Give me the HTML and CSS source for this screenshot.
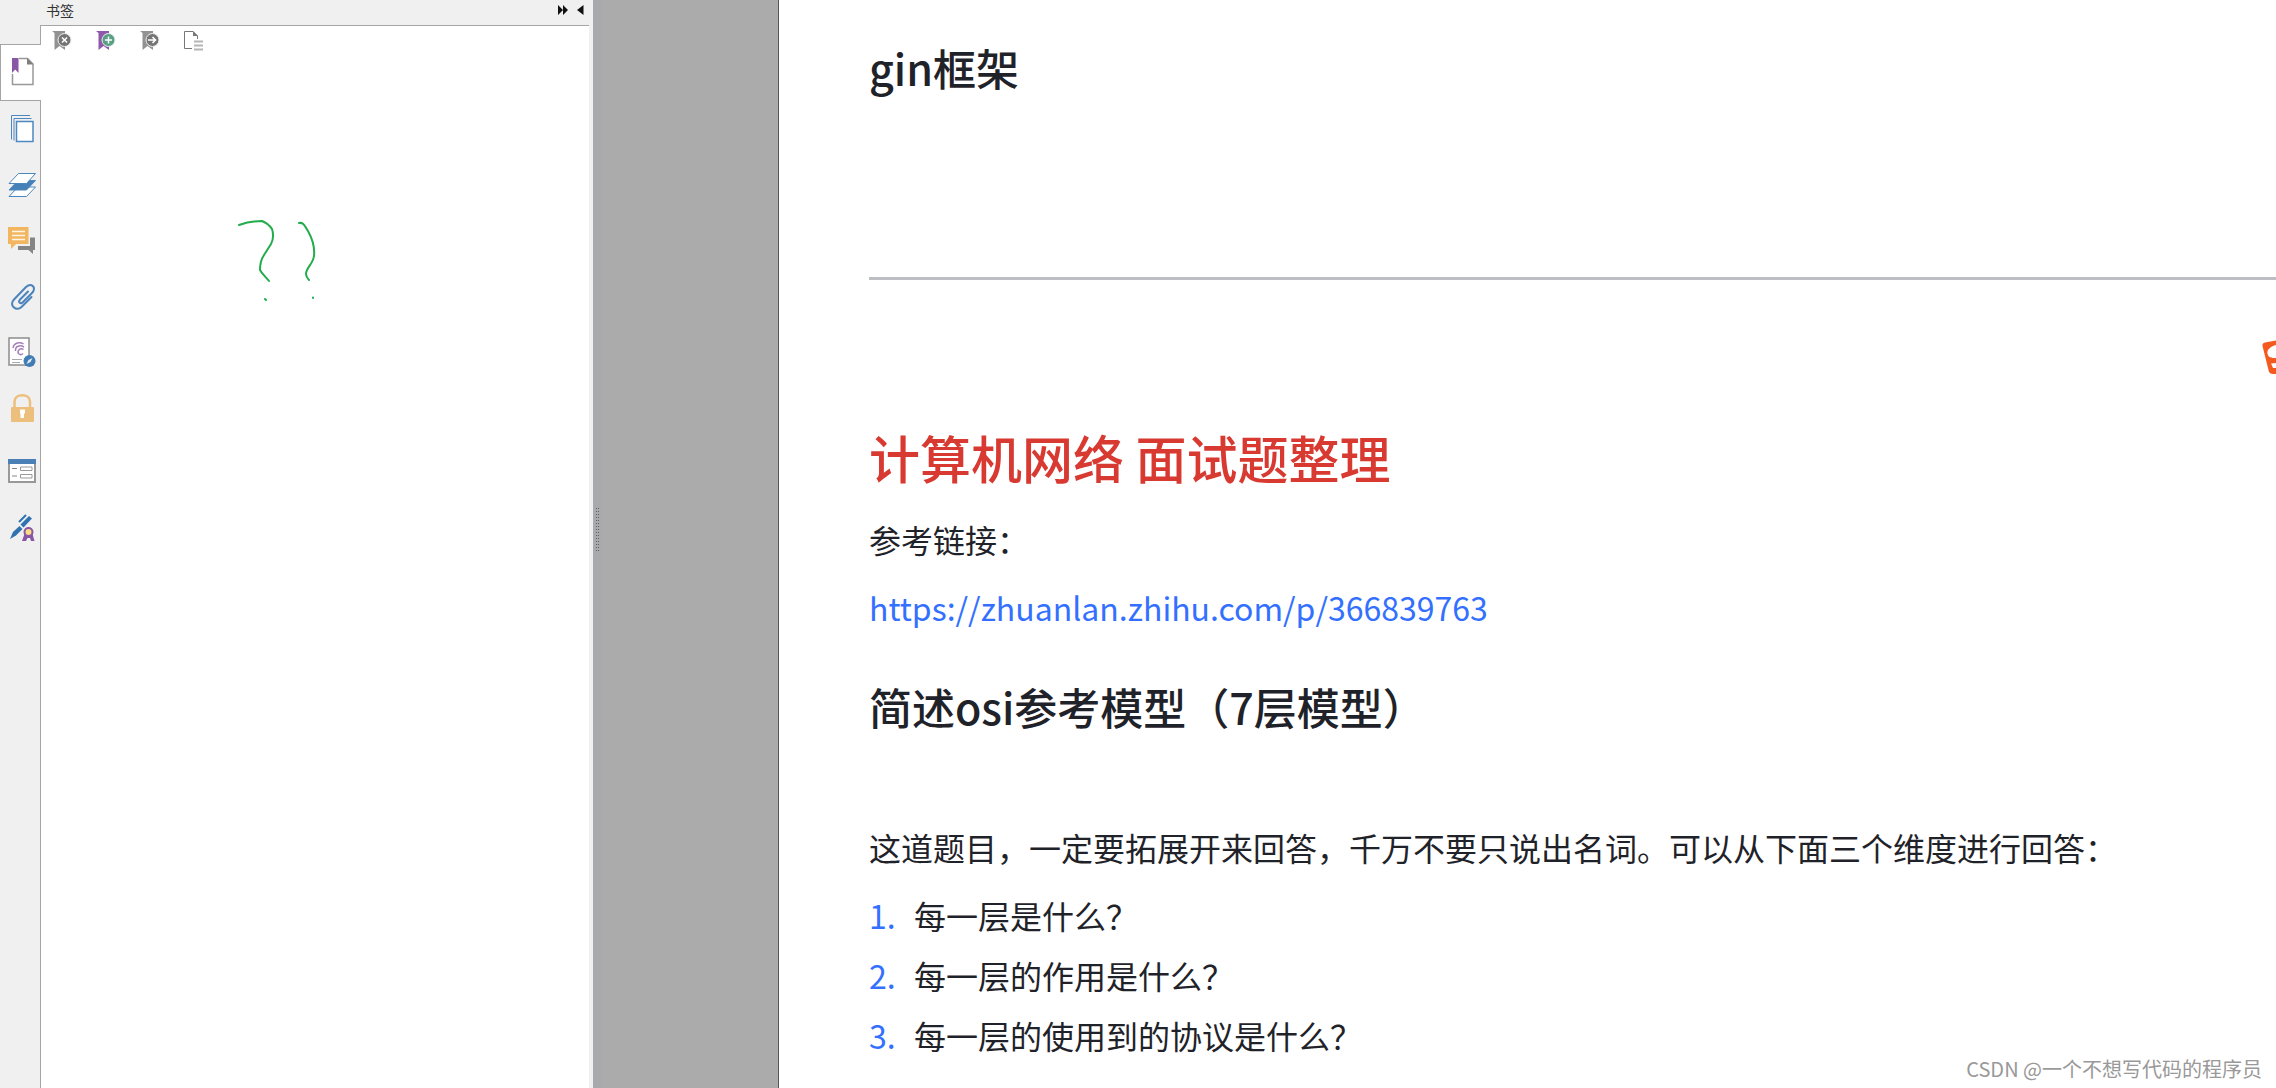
FILE: index.html
```
<!DOCTYPE html>
<html lang="zh-CN">
<head>
  <meta charset="UTF-8" />
  <meta name="viewport" content="width=device-width, initial-scale=1.0"/>
  <title>面试题整理</title>
  <link rel="stylesheet" href="styles.css">
</head>
<body>

  <!-- Navigation rail -->
  <nav class="rail">
    <button class="rail-button active" aria-label="书签">
      <svg viewBox="0 0 40 56">
        <path d="M19 14.500H27.500L33 20V40.500H12.500V30" fill="none" stroke="#999" stroke-width="1.500"/>
        <path d="M27 14L33.500 20.500H27Z" fill="#808080"/>
        <path d="M12 14H18.500V29L15.200 25.500L12 29Z" fill="#8a57a5"/>
      </svg>
    </button>
    <button class="rail-button" aria-label="页面">
      <svg viewBox="0 0 40 56" fill="none" stroke="#4d88c2">
        <path d="M11.500 39.500V15.500H30M14 40.500V18.500H31.500"/>
        <rect x="16.500" y="21.500" width="16.500" height="20" fill="#fff" stroke-width="1.500"/>
      </svg>
    </button>
    <button class="rail-button" aria-label="图层">
      <svg viewBox="0 0 40 56" stroke="#4d86bd" stroke-width="1">
        <path d="M9 40.500L18 31H35.500L26.500 40.500Z" fill="#fff"/>
        <path d="M9 34L18 24.500H35.500L26.500 34Z" fill="#4580b8"/>
        <path d="M9 27.500L18.500 17.500H35.500L26.500 27.500Z" fill="#fff"/>
      </svg>
    </button>
    <button class="rail-button" aria-label="注释">
      <svg viewBox="0 0 40 56">
        <path d="M30 25.500H35V38H33V42L28.500 38H18V34H30Z" fill="#858585"/>
        <path d="M8 15H28.500V32H16L11 37V32H8Z" fill="#f2b661"/>
        <path d="M12 19.500H25M12 23.500H25M12 27.500H25" stroke="#fff5e4" stroke-width="1.500"/>
      </svg>
    </button>
    <button class="rail-button" aria-label="附件">
      <svg viewBox="0 0 40 56" fill="none" stroke="#4b83bc" stroke-width="2" stroke-linecap="round" stroke-linejoin="round">
        <path d="M31.500 29L21.500 39C18 42.500 12.500 40.500 12 36C12 34 12.500 33 14 31.500L26 19C30 15.500 34 17 34 21C34 23 33 24 31.500 25.500L22.500 34.500C20.500 36.500 18 34 19.800 31.800L28 23.500"/>
      </svg>
    </button>
    <button class="rail-button" aria-label="数字签名">
      <svg viewBox="0 0 40 56">
        <rect x="9" y="14" width="20" height="27" fill="#fff" stroke="#8c8c8c" stroke-width="1.500"/>
        <path d="M12 35.500H22M12 38.500H20" stroke="#aaa"/>
        <path d="M13 24C14 18.500 20 17.500 23.500 20M15.500 27C15 22 20 20.500 24 23M23.500 25.500C20 23.500 17 27 18.500 29.500C20 31 22 30.500 23 29.500" fill="none" stroke="#a680bb" stroke-width="1.500"/>
        <circle cx="29.500" cy="37" r="6" fill="#417cb4"/>
        <path d="M26.500 40L28.500 36L32.500 34L30.500 38Z" fill="#e3edf6"/>
      </svg>
    </button>
    <button class="rail-button" aria-label="安全">
      <svg viewBox="0 0 40 56">
        <path d="M14.500 28V21.500C14.500 13 30 13 30 21.500V28" fill="none" stroke="#ecbf7c" stroke-width="2.500"/>
        <rect x="11" y="27" width="23" height="15" rx="1" fill="#ecbf7c"/>
        <path d="M20 29.500H25V33L24 34V38H20.500V34L20 33Z" fill="#fff"/>
      </svg>
    </button>
    <button class="rail-button spaced" aria-label="表单域">
      <svg viewBox="0 0 40 56">
        <rect x="9" y="18" width="26" height="22" fill="#fff" stroke="#999" stroke-width="2"/>
        <rect x="8" y="17" width="28" height="5" fill="#4a80b6"/>
        <path d="M12 26.500H17M12 34H17" stroke="#888"/>
        <path d="M20.500 25H32V28.500H20.500ZM20.500 32.500H32V36H20.500Z" fill="#fff" stroke="#999"/>
      </svg>
    </button>
    <button class="rail-button" aria-label="签名">
      <svg viewBox="0 0 40 56">
        <path d="M10 41L13 34L19.500 28L22.500 31L16 37.500Z" fill="#2f72b0"/>
        <path d="M20.500 26.500L29 18L32 20.500L23.500 29.500Z" fill="#2f72b0"/>
        <path d="M19 24L26 17" stroke="#2f72b0" stroke-width="2"/>
        <path d="M24.500 36L22 43H26L27.500 40H30L31 43H34.500L32.500 36Z" fill="#8856a5"/>
        <circle cx="28.500" cy="34" r="4" fill="#fbdc80" stroke="#8856a5" stroke-width="2"/>
      </svg>
    </button>
  </nav>

  <!-- Bookmark panel -->
  <aside class="panel">
    <header class="panel-header">
      <span class="panel-title">书签</span>
      <button class="header-button" aria-label="展开">
        <svg width="10" height="10" viewBox="0 0 10 10"><path d="M0 0L5 5L0 10ZM5 0L10 5L5 10Z" fill="#111"/></svg>
      </button>
      <button class="header-button" aria-label="折叠">
        <svg width="7" height="10" viewBox="0 0 7 10"><path d="M6.500 0V10L0 5Z" fill="#111"/></svg>
      </button>
    </header>
    <div class="panel-body">
      <div class="toolbar">
        <button class="tool-button" aria-label="删除书签">
          <svg viewBox="0 0 20 20">
            <path d="M0 0H13V13L13 19L7.500 15L2.500 19V2Z" fill="#929292"/>
            <circle cx="12.500" cy="9" r="6.500" fill="#757575" stroke="#eee"/>
            <path d="M10 6.500L15 11.500M15 6.500L10 11.500" stroke="#fff" stroke-width="1.500"/>
          </svg>
        </button>
        <button class="tool-button" aria-label="新建书签">
          <svg viewBox="0 0 20 20">
            <path d="M0 0H13V13L13 19L7.500 15L2.500 19V2Z" fill="#9058aa"/>
            <circle cx="12.500" cy="9" r="6.500" fill="#58a184" stroke="#eee"/>
            <path d="M9 9H16M12.500 5.500V12.500" stroke="#fff" stroke-width="1.500"/>
          </svg>
        </button>
        <button class="tool-button" aria-label="转到书签">
          <svg viewBox="0 0 20 20">
            <path d="M0 0H13V13L13 19L7.500 15L2.500 19V2Z" fill="#929292"/>
            <circle cx="12.500" cy="9" r="6.500" fill="#757575" stroke="#eee"/>
            <path d="M8 9H15.500M12.500 6L15.500 9L12.500 12" fill="none" stroke="#fff" stroke-width="1.500"/>
          </svg>
        </button>
        <button class="tool-button" aria-label="选项">
          <svg viewBox="0 0 20 20">
            <path d="M8 17.500H0.500V0.500H9L13.500 5V8" fill="none" stroke="#777"/>
            <path d="M9 0V5H14Z" fill="#777"/>
            <path d="M10 10.500H19M10 14.500H19M10 18.500H19" stroke="#b5b5b5" stroke-width="2"/>
          </svg>
        </button>
      </div>
      <!-- Pen marks -->
      <svg class="ink" width="80" height="84" viewBox="0 0 80 84">
        <path d="M1 6C9 3 16 2 24 2C29 4 32 7 34 10C36 16 35 21 33 25L26 36C22 42 22 47 22 51C24 55 28 58 31 62"/>
        <path d="M61 4C66 3 67 8 70 12C75 21 77 28 76 37C75 45 68 49 68 55C68 58 70 60 71 61"/>
        <path d="M27 80L28 81M75 78.500V79"/>
      </svg>
    </div>
  </aside>

  <!-- Document area -->
  <div class="splitter">
    <div class="grip"></div>
  </div>
  <main class="canvas">
    <article class="sheet">
      <h2>gin框架</h2>
      <hr>
      <h1>计算机网络 面试题整理</h1>
      <p>参考链接：</p>
      <p><a href="https://zhuanlan.zhihu.com/p/366839763">https://zhuanlan.zhihu.com/p/366839763</a></p>
      <h2 class="question">简述osi参考模型（7层模型）</h2>
      <p>这道题目，一定要拓展开来回答，千万不要只说出名词。可以从下面三个维度进行回答：</p>
      <ol>
        <li><span class="num">1.</span>每一层是什么？</li>
        <li><span class="num">2.</span>每一层的作用是什么？</li>
        <li><span class="num">3.</span>每一层的使用到的协议是什么？</li>
      </ol>
    </article>
  </main>

  <svg class="ime-logo" width="14" height="36" viewBox="0 0 14 36">
    <path d="M14 0.500L3 2.500Q0 3 0.500 6L7 32Q8 34 11 34H14Z" fill="#f4591f"/>
    <path d="M14 5C7 7 4 11 6 15C7 18 10 18 14 18Z" fill="#fff"/>
    <path d="M14 23L9 23.500L11 28H14Z" fill="#fff"/>
  </svg>
  <div class="watermark">CSDN @一个不想写代码的程序员</div>

</body>
</html>
```

FILE: styles.css
```
* {
  box-sizing: border-box;
}

body {
  margin: 0;
  min-height: 100vh;
  display: flex;
  position: relative;
  overflow-x: hidden;
  font-family: "Noto Sans CJK SC", sans-serif;
  background-color: #fff;
  color: #1f2329;
}

button {
  padding: 0;
  border: none;
  background: transparent;
  cursor: pointer;
}

svg {
  display: block;
}

/* Navigation rail */
.rail {
  width: 41px;
  flex: none;
  display: flex;
  flex-direction: column;
  padding-top: 44px;
  background: linear-gradient(#a5a5a5, #a5a5a5) 40px 25px / 1px 100% no-repeat, #f0f0f0;
}

.rail-button {
  width: 41px;
  height: 56px;
}

.rail-button svg {
  width: 40px;
  height: 56px;
}

.rail-button.active {
  background-color: #fff;
  box-shadow: inset 1px 1px #a5a5a5, 0 1px #a5a5a5;
}

.rail-button.spaced {
  margin-top: 6px;
}

/* Bookmark panel */
.panel {
  width: 552px;
  flex: none;
  display: flex;
  flex-direction: column;
  background-color: #f0f0f0;
  padding-right: 4px;
}

.panel-header {
  height: 25px;
  display: flex;
  align-items: center;
  gap: 9px;
  padding: 0 5px 6px 5px;
}

.panel-title {
  flex: 1;
  font-size: 14px;
  line-height: 18px;
  color: #333;
}

.panel-body {
  flex: 1;
  position: relative;
  border-top: 1px solid #a5a5a5;
  background-color: #fff;
}

.toolbar {
  display: flex;
  gap: 24px;
  padding: 5px 11px;
}

.tool-button,
.tool-button svg {
  width: 20px;
  height: 20px;
}

.ink {
  position: absolute;
  left: 197px;
  top: 193px;
  fill: none;
  stroke: #22ac4b;
  stroke-width: 2;
  stroke-linecap: round;
}

/* Splitter */
.splitter {
  width: 8px;
  flex: none;
  display: flex;
  align-items: center;
  padding-left: 3px;
  padding-bottom: 34px;
  background-color: #a7a9ac;
}

.grip {
  width: 3px;
  height: 43px;
  background: repeating-linear-gradient(transparent 0 1px, #a7a9ac 1px 3px), repeating-linear-gradient(to right, #5e6168 0 1px, transparent 1px 2px);
}

/* Document */
.canvas {
  flex: 1;
  padding-left: 177px;
  background-color: #ababab;
}

.sheet {
  min-height: 100vh;
  padding: 37px 0 20px 90px;
  border-left: 1px solid #555;
  background-color: #fff;
}

.sheet h1,
.sheet h2,
.sheet p,
.sheet li {
  margin: 0;
  line-height: 60px;
}

.sheet h1,
.sheet h2 {
  font-weight: 500;
}

.sheet h1 {
  margin-bottom: 22px;
  font-size: 51px;
  color: #d83931;
}

.sheet h2 {
  font-size: 43px;
}

.sheet hr {
  height: 3px;
  margin: 180px 0 147px;
  border: none;
  background-color: #bbbfc4;
}

.sheet p,
.sheet ol {
  margin: 0 0 8px;
  font-size: 32px;
}

.sheet a {
  color: #3370ff;
  text-decoration: none;
}

.sheet .question {
  margin: 39px 0 81px;
}

.sheet ol {
  padding: 0;
  list-style: none;
}

.sheet li {
  display: flex;
}

.num {
  width: 45px;
  color: #3370ff;
}

/* Overlays */
.ime-logo {
  position: absolute;
  top: 340px;
  right: 0;
}

.watermark {
  position: absolute;
  right: 14px;
  bottom: 9px;
  font-size: 20px;
  line-height: 30px;
  color: #999;
}
```
